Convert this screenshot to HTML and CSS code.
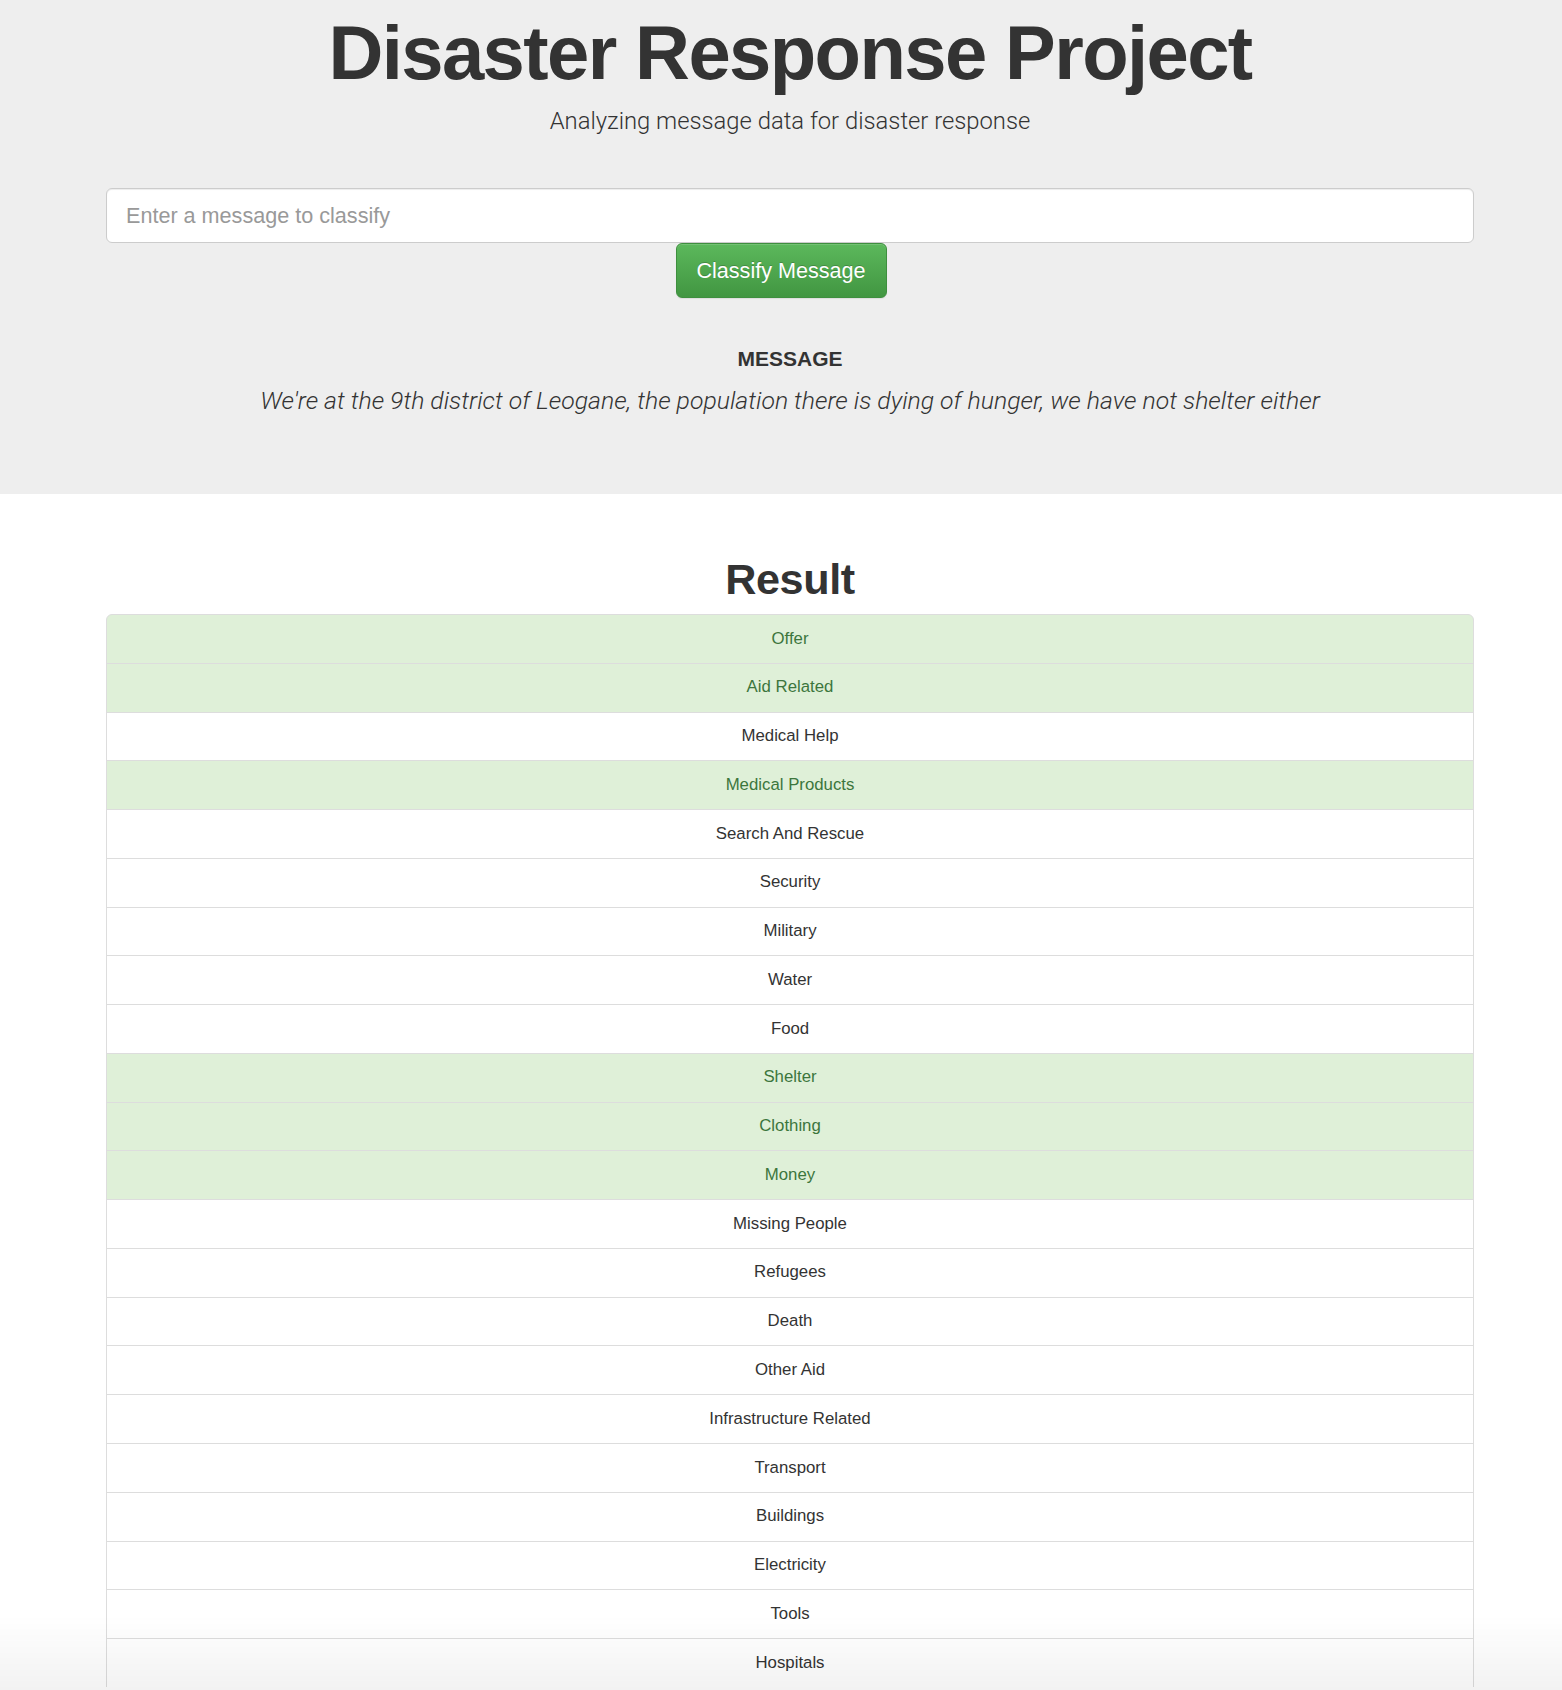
FILE: index.html
```html
<!DOCTYPE html>
<html lang="en">
<head>
<meta charset="utf-8">
<title>Disaster Response Project</title>
<link rel="stylesheet" href="styles.css">
</head>
<body>
<div class="jumbotron">
  <div class="container">
    <h1 class="title">Disaster Response Project</h1>
    <p class="lead">Analyzing message data for disaster response</p>
    <input class="msg-input" type="text" placeholder="Enter a message to classify">
  </div>
  <div class="btn-row">
    <button class="btn-success" type="button">Classify Message</button>
  </div>
  <div class="container">
    <h4 class="msg-label">MESSAGE</h4>
    <p class="msg-text">We're at the 9th district of Leogane, the population there is dying of hunger, we have not shelter either</p>
  </div>
</div>
<div class="container">
  <h1 class="result-title">Result</h1>
  <ul class="list-group">
    <li class="item success">Offer</li>
    <li class="item success">Aid Related</li>
    <li class="item">Medical Help</li>
    <li class="item success">Medical Products</li>
    <li class="item">Search And Rescue</li>
    <li class="item">Security</li>
    <li class="item">Military</li>
    <li class="item">Water</li>
    <li class="item">Food</li>
    <li class="item success">Shelter</li>
    <li class="item success">Clothing</li>
    <li class="item success">Money</li>
    <li class="item">Missing People</li>
    <li class="item">Refugees</li>
    <li class="item">Death</li>
    <li class="item">Other Aid</li>
    <li class="item">Infrastructure Related</li>
    <li class="item">Transport</li>
    <li class="item">Buildings</li>
    <li class="item">Electricity</li>
    <li class="item">Tools</li>
    <li class="item">Hospitals</li>
  </ul>
</div>
<div class="bottom-fade"></div>
</body>
</html>
```

FILE: styles.css
```css
html, body {
  margin: 0;
  padding: 0;
  background: #fff;
}
body {
  font-family: "Liberation Sans", Arial, Helvetica, sans-serif;
  color: #333;
  font-size: 16.8px;
}
.container {
  width: 1368px;
  margin-left: 106px;
}
.jumbotron {
  background: #eee;
  padding-top: 11px;
  padding-bottom: 77px;
}
.title {
  margin: 0;
  font-size: 76px;
  line-height: 84px;
  font-weight: bold;
  letter-spacing: -1.6px;
  text-align: center;
  color: #333;
}
.lead {
  margin: 11px 0 0;
  font-family: Roboto, "Liberation Sans", sans-serif;
  font-weight: 300;
  font-size: 23.8px;
  line-height: 30px;
  text-align: center;
  color: #333;
}
.msg-input {
  display: block;
  box-sizing: border-box;
  width: 100%;
  height: 55px;
  margin: 52px 0 0;
  padding: 0 19px;
  border: 1px solid #ccc;
  border-radius: 6px;
  background: #fff;
  box-shadow: inset 0 1px 1px rgba(0,0,0,.075);
  font-family: "Liberation Sans", Arial, sans-serif;
  font-size: 21.6px;
  color: #555;
  outline: none;
}
.msg-input::placeholder {
  color: #999;
}
.btn-row {
  display: flex;
  justify-content: center;
}
.btn-success {
  box-sizing: border-box;
  width: 211px;
  height: 55px;
  padding: 0;
  border: 1px solid #3e8f3e;
  border-radius: 6px;
  background: linear-gradient(to bottom, #5cb85c 0%, #419641 100%);
  box-shadow: inset 0 1px 0 rgba(255,255,255,.15), 0 1px 1px rgba(0,0,0,.075);
  color: #fff;
  text-shadow: 0 -1px 0 rgba(0,0,0,.2);
  font-family: "Liberation Sans", Arial, sans-serif;
  font-size: 21.6px;
  cursor: pointer;
}
.msg-label {
  margin: 48px 0 0;
  font-size: 21px;
  line-height: 26px;
  font-weight: bold;
  text-align: center;
  color: #333;
}
.msg-text {
  margin: 13px 0 0;
  font-family: Roboto, "Liberation Sans", sans-serif;
  font-weight: 300;
  font-style: italic;
  font-size: 24.8px;
  line-height: 32px;
  text-align: center;
  color: #333;
}
.result-title {
  margin: 61px 0 0;
  font-size: 43.2px;
  line-height: 48px;
  font-weight: bold;
  letter-spacing: -0.4px;
  text-align: center;
  color: #333;
}
.list-group {
  list-style: none;
  margin: 11px 0 0;
  padding: 0;
}
.item {
  position: relative;
  padding: 11.5px 18px;
  line-height: 24.77px;
  border: 1px solid #ddd;
  margin-bottom: -1px;
  background: #fff;
  text-align: center;
  font-size: 16.8px;
  color: #333;
}
.item:first-child {
  border-top-left-radius: 6px;
  border-top-right-radius: 6px;
}
.item.success {
  background: #dff0d8;
  color: #3c763d;
}
.bottom-fade {
  position: fixed;
  left: 0;
  right: 0;
  bottom: 0;
  height: 75px;
  background: linear-gradient(to bottom, rgba(0,0,0,0), rgba(0,0,0,.05));
  pointer-events: none;
}
```
